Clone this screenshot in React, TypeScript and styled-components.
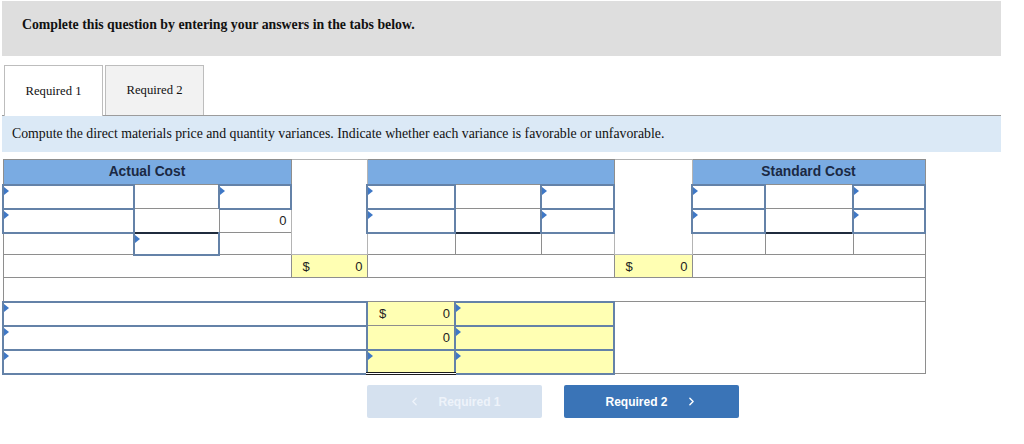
import styled, { createGlobalStyle, css } from "styled-components";
import { ChevronLeft, ChevronRight } from "lucide-react";

import type React from "react";

/* -----------------------------------------------
 * Worksheet: direct materials variances
 * ----------------------------------------------- */

const GlobalStyle = createGlobalStyle`
  body {
    margin: 0;
    background: #fff;
    font-family: "Liberation Serif", "Times New Roman", serif;
    color: #111;
  }
`;

const colWidths = [131, 85, 72, 76, 88, 86, 73, 78, 73, 88, 72];

type CellProps = {
  $input?: boolean;
  $yellow?: boolean;
  $marker?: boolean;
  $edge?: "top" | "bottom";
  $soft?: boolean;
};

const App: React.FC = () => {
  return (
    <Page>
      <GlobalStyle />
      <HeaderBar>Complete this question by entering your answers in the tabs below.</HeaderBar>

      {/* タブ */}
      <TabRow>
        <Tab $active>Required 1</Tab>
        <Tab>Required 2</Tab>
      </TabRow>

      <Instruction>
        Compute the direct materials price and quantity variances. Indicate whether each variance is favorable or
        unfavorable.
      </Instruction>

      {/* ワークシート */}
      <Sheet>
        <colgroup>
          {colWidths.map((w, i) => (
            <Col key={i} $w={w} />
          ))}
        </colgroup>
        <tbody>
          <Row $h={25}>
            <HeadCell colSpan={3}>Actual Cost</HeadCell>
            <Cell rowSpan={4} $soft />
            <HeadCell colSpan={3} />
            <Cell rowSpan={4} $soft />
            <HeadCell colSpan={3}>Standard Cost</HeadCell>
          </Row>
          <Row $h={24}>
            <Cell $input $marker />
            <Cell />
            <Cell $input $marker />
            <Cell $input $marker />
            <Cell />
            <Cell $input $marker />
            <Cell $input $marker />
            <Cell />
            <Cell $input $marker />
          </Row>
          <Row $h={24}>
            <Cell $input $marker />
            <Cell />
            <Cell>0</Cell>
            <Cell $input $marker />
            <Cell />
            <Cell $input $marker />
            <Cell $input $marker />
            <Cell />
            <Cell $input $marker />
          </Row>
          <Row $h={22}>
            <Cell />
            <Cell $input $marker $edge="top" />
            <Cell />
            <Cell />
            <Cell $edge="top" />
            <Cell />
            <Cell />
            <Cell $edge="top" />
            <Cell />
          </Row>
          <Row $h={23}>
            <Cell colSpan={3} />
            <Cell $yellow>
              <Amount>
                <span>$</span>
                <span>0</span>
              </Amount>
            </Cell>
            <Cell colSpan={3} />
            <Cell $yellow>
              <Amount>
                <span>$</span>
                <span>0</span>
              </Amount>
            </Cell>
            <Cell colSpan={3} />
          </Row>
          <Row $h={24}>
            <Cell colSpan={11} />
          </Row>
          <Row $h={24}>
            <Cell colSpan={4} $input $marker />
            <Cell $yellow>
              <Amount>
                <span>$</span>
                <span>0</span>
              </Amount>
            </Cell>
            <Cell colSpan={2} $input $yellow $marker />
            <Cell colSpan={4} rowSpan={3} />
          </Row>
          <Row $h={24}>
            <Cell colSpan={4} $input $marker />
            <Cell $yellow>
              <Amount>
                <span />
                <span>0</span>
              </Amount>
            </Cell>
            <Cell colSpan={2} $input $yellow $marker />
          </Row>
          <Row $h={24}>
            <Cell colSpan={4} $input $marker />
            <Cell $input $yellow $marker $edge="bottom" />
            <Cell colSpan={2} $input $yellow $marker />
          </Row>
        </tbody>
      </Sheet>

      {/* ナビゲーションボタン */}
      <ButtonRow>
        <NavButton disabled>
          <ChevronLeft size={13} strokeWidth={2.6} />
          Required 1
        </NavButton>
        <NavButton $active>
          Required 2
          <ChevronRight size={13} strokeWidth={2.6} />
        </NavButton>
      </ButtonRow>
    </Page>
  );
};

const Page = styled.div`
  width: 999px;
  padding: 1px 0 0 2px;
`;

const HeaderBar = styled.div`
  height: 55px;
  box-sizing: border-box;
  padding: 16px 0 0 20px;
  background: #dedede;
  font-size: 13.8px;
  font-weight: bold;
  line-height: 16px;
`;

const TabRow = styled.div`
  display: flex;
  gap: 2px;
  height: 50px;
  margin-top: 9px;
  padding-left: 2px;
  border-bottom: 1px solid #9c9c9c;
`;

const Tab = styled.div<{ $active?: boolean }>`
  width: 99px;
  box-sizing: border-box;
  display: flex;
  align-items: center;
  justify-content: center;
  border: 1px solid #bdbdbd;
  border-bottom: none;
  font-size: 12.7px;
  color: #111;
  background: ${(p) => (p.$active ? "#fff" : "#f2f2f2")};
  ${(p) =>
    p.$active &&
    css`
      height: 51px;
      position: relative;
      z-index: 1;
    `}
`;

const Instruction = styled.div`
  height: 36px;
  padding-left: 10px;
  background: #dbe9f6;
  font-size: 13.8px;
  line-height: 36px;
  color: #111;
`;

const Sheet = styled.table`
  margin-top: 7px;
  width: 922px;
  border-collapse: collapse;
  table-layout: fixed;
  font-family: "Liberation Sans", Arial, sans-serif;
  font-size: 13px;
  color: #222;
`;

const Col = styled.col<{ $w: number }>`
  width: ${(p) => p.$w}px;
`;

const Row = styled.tr<{ $h: number }>`
  height: ${(p) => p.$h}px;
`;

const HeadCell = styled.th`
  padding: 0;
  border: 1px solid #8e8e8e;
  background: #7aabe2;
  color: #1b2944;
  font-size: 13.8px;
  font-weight: bold;
  text-align: center;
`;

const Cell = styled.td<CellProps>`
  position: relative;
  padding: 0 4px 0 0;
  border: 1px solid #8e8e8e;
  background: ${(p) => (p.$yellow ? "#ffffb3" : "#fff")};
  text-align: right;
  ${(p) =>
    p.$soft &&
    css`
      border-color: #b4b4b4;
    `}
  ${(p) =>
    p.$input &&
    css`
      border: 2px solid #6482a8;
    `}
  ${(p) =>
    p.$edge === "top" &&
    css`
      border-top: 2px solid #1f2b3d;
    `}
  ${(p) =>
    p.$edge === "bottom" &&
    css`
      border-bottom: 3px double #1a1a1a;
    `}
  ${(p) =>
    p.$marker &&
    css`
      &::before {
        content: "";
        position: absolute;
        left: 0;
        top: 1px;
        border-left: 5px solid #3f78c6;
        border-top: 4px solid transparent;
        border-bottom: 4px solid transparent;
      }
    `}
`;

const Amount = styled.span`
  display: flex;
  justify-content: space-between;
  padding-left: 11px;
`;

const ButtonRow = styled.div`
  display: flex;
  gap: 22px;
  margin-top: 10px;
  padding-left: 365px;
`;

const NavButton = styled.button<{ $active?: boolean }>`
  width: 175px;
  height: 33px;
  display: flex;
  align-items: center;
  justify-content: center;
  gap: 17px;
  border: none;
  border-radius: 2px;
  background: ${(p) => (p.$active ? "#3a74b7" : "#d5e1ef")};
  color: ${(p) => (p.$active ? "#fff" : "#eef3fa")};
  font-family: "Liberation Sans", Arial, sans-serif;
  font-size: 12px;
  font-weight: bold;
  cursor: pointer;

  &:disabled {
    cursor: default;
  }
`;

export default App;
